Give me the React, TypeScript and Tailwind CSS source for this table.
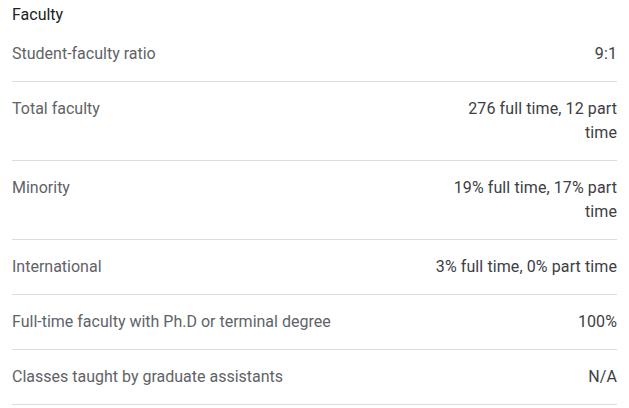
const rows: { label: string; value: string }[] = [
  { label: "Student-faculty ratio", value: "9:1" },
  { label: "Total faculty", value: "276 full time, 12 part time" },
  { label: "Minority", value: "19% full time, 17% part time" },
  { label: "International", value: "3% full time, 0% part time" },
  { label: "Full-time faculty with Ph.D or terminal degree", value: "100%" },
  { label: "Classes taught by graduate assistants", value: "N/A" },
];

export default function App() {
  return (
    <div className="min-h-screen bg-white px-3 font-['Roboto',sans-serif]">
      <h2 className="mb-px pt-[4px] text-[16px] leading-[22px] font-normal text-[#202124]">Faculty</h2>
      <div>
        {rows.map((row) => (
          <div
            key={row.label}
            className="flex justify-between gap-4 border-b border-[#dadce0] py-[15px] text-[16px] leading-[24px]"
          >
            <div className="text-[#5f6368]">{row.label}</div>
            <div className="w-[182px] shrink-0 text-right tracking-[0.1px] text-[#3c4043]">{row.value}</div>
          </div>
        ))}
      </div>
    </div>
  );
}
